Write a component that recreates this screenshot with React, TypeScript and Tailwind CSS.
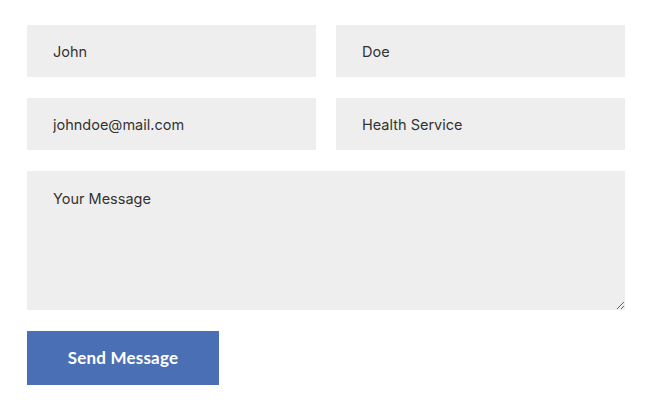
export default function App() {
  return (
    <div className="w-[660px] h-[405px] overflow-hidden bg-white font-['Inter',sans-serif]">
      <p className="-mt-[18px] pl-[64px] text-[16px] leading-[16px] text-[#555]">
        Get in touch yo, quickly ready, or simply pay a visit anytime
      </p>
      <form className="mt-[27px] ml-[27px] w-[598px] flex flex-col gap-[21px]">
        <div className="grid grid-cols-2 gap-[20px]">
          <input
            defaultValue="John"
            className="h-[52px] bg-[#eeeeee] px-[26px] text-[14.5px] text-[#333] outline-none"
          />
          <input
            defaultValue="Doe"
            className="h-[52px] bg-[#eeeeee] px-[26px] text-[14.5px] text-[#333] outline-none"
          />
        </div>
        <div className="grid grid-cols-2 gap-[20px]">
          <input
            defaultValue="johndoe@mail.com"
            className="h-[52px] bg-[#eeeeee] px-[26px] text-[14.5px] text-[#333] outline-none"
          />
          <input
            defaultValue="Health Service"
            className="h-[52px] bg-[#eeeeee] px-[26px] text-[14.5px] text-[#333] outline-none"
          />
        </div>
        <textarea
          placeholder="Your Message"
          className="block h-[139px] bg-[#eeeeee] px-[26px] pt-[17px] text-[14.5px] text-[#333] placeholder:text-[#333] outline-none"
        />
        <div>
          <button
            type="button"
            className="w-[192px] h-[54px] bg-[#4a6fb5] text-white font-['Lato',sans-serif] font-bold text-[17px] tracking-[0.2px]"
          >
            Send Message
          </button>
        </div>
      </form>
    </div>
  )
}
